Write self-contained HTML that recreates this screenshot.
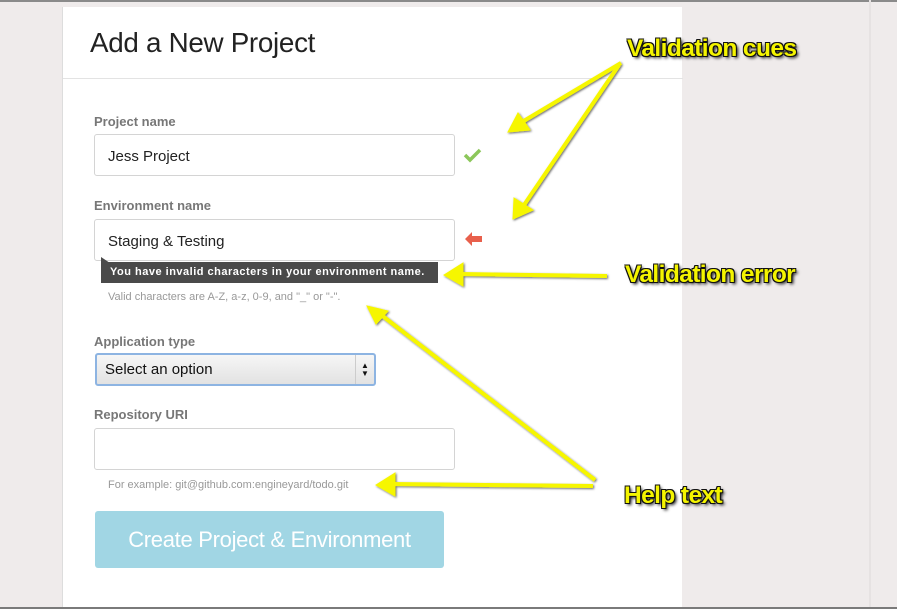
<!DOCTYPE html>
<html><head><style>
*{box-sizing:border-box;margin:0;padding:0}
body{width:897px;height:609px;background:#efebeb;font-family:"Liberation Sans",Arial,sans-serif;position:relative;overflow:hidden}
.top{position:absolute;left:0;top:0;width:897px;height:2px;background:#8a8a8a}
.bot{position:absolute;left:0;bottom:0;width:897px;height:2px;background:#7a7a7a}
.panel{position:absolute;left:62px;top:7px;width:620px;height:602px;background:#fff;border-left:1px solid #ddd}
.rl{position:absolute;left:869px;top:0;width:2px;height:609px;background:#e6e2e2}
h1{position:absolute;left:27px;top:20px;font-size:27.8px;font-weight:normal;color:#222;letter-spacing:-0.3px}
.sep{position:absolute;left:0;top:71px;width:620px;height:1px;background:#e3e3e3}
.lbl{position:absolute;left:31px;font-size:13px;font-weight:bold;color:#777}
.inp{position:absolute;left:31px;width:361px;height:42px;border:1px solid #d4d4d4;border-radius:3px;font-size:15px;color:#222;padding:13px 0 0 13px}
.help{position:absolute;left:45px;font-size:11px;color:#999}
.tip{position:absolute;left:38px;top:255px;width:337px;height:21px;background:#4a4a4a;color:#fff;font-size:11px;font-weight:bold;letter-spacing:0.5px;padding:4px 0 0 9px}
.sel{position:absolute;left:32px;top:346px;width:281px;height:33px;border:2px solid #8db4e2;border-radius:3px;background:linear-gradient(#f6f6f6,#e2e2e2);font-size:15px;color:#111;padding:6px 0 0 8px}
.sel .ar{position:absolute;right:0;top:0;width:19px;height:29px;border-left:1px solid #ccc;font-size:8px;line-height:8px;text-align:center;padding-top:7px}
.btn{position:absolute;left:32px;top:504px;width:349px;height:57px;background:#a1d6e4;border-radius:3px;color:#fff;font-size:22px;text-align:center;line-height:57px;letter-spacing:-0.3px}
.ann{position:absolute;font-size:24.5px;font-weight:bold;color:#f4f400;letter-spacing:-0.6px;text-shadow:-1px -1px 0 #111,1px -1px 0 #111,-1px 1px 0 #111,1px 1px 0 #111,2px 2px 3px #000}
</style></head><body>
<div class="top"></div>
<div class="rl"></div>
<div class="panel">
<h1>Add a New Project</h1>
<div class="sep"></div>
<div class="lbl" style="top:107px">Project name</div>
<div class="inp" style="top:127px">Jess Project</div>
<div class="lbl" style="top:191px">Environment name</div>
<div class="inp" style="top:212px">Staging &amp; Testing</div>
<svg style="position:absolute;left:38px;top:250px" width="12" height="8"><path d="M0 0 L0 8 L12 8 Z" fill="#4a4a4a"/></svg>
<div class="tip">You have invalid characters in your environment name.</div>
<div class="help" style="top:284px">Valid characters are A-Z, a-z, 0-9, and "_" or "-".</div>
<div class="lbl" style="top:327px">Application type</div>
<div class="sel">Select an option<div class="ar">▲<br>▼</div></div>
<div class="lbl" style="top:400px">Repository URI</div>
<div class="inp" style="top:421px"></div>
<div class="help" style="top:472px">For example: git@github.com:engineyard/todo.git</div>
<div class="btn">Create Project &amp; Environment</div>
<svg style="position:absolute;left:400px;top:140px" width="20" height="16"><path d="M2 8 L7 13 L17 3" stroke="#8cc75a" stroke-width="3.5" fill="none"/></svg>
<svg style="position:absolute;left:401px;top:224px" width="20" height="16"><path d="M1 8 L8 1 L8 5 L18 5 L18 11 L8 11 L8 15 Z" fill="#e8604c"/></svg>
</div>
<svg style="position:absolute;left:0;top:0" width="897" height="609">
<defs><filter id="s"><feDropShadow dx="1" dy="1" stdDeviation="1" flood-color="#000" flood-opacity="0.6"/></filter></defs>
<g fill="#f6f600" stroke="#f6f600" stroke-width="4" filter="url(#s)">
<line x1="621" y1="63" x2="522" y2="122"/><path d="M508 132 L518 113 L530 130 Z" stroke-width="1"/>
<line x1="619" y1="65" x2="524" y2="205"/><path d="M513 219 L514 198 L533 210 Z" stroke-width="1"/>
<line x1="607" y1="276" x2="460" y2="274"/><path d="M444 275 L463 263 L463 286 Z" stroke-width="1"/>
<line x1="595" y1="480" x2="380" y2="314"/><path d="M367 306 L388 311 L376 324 Z" stroke-width="1"/>
<line x1="593" y1="486" x2="392" y2="484"/><path d="M376 485 L395 473 L395 496 Z" stroke-width="1"/>
</g></svg>
<div class="ann" style="left:627px;top:35px">Validation cues</div>
<div class="ann" style="left:625px;top:261px">Validation error</div>
<div class="ann" style="left:624px;top:482px">Help text</div>
<div class="bot"></div>
</body></html>
